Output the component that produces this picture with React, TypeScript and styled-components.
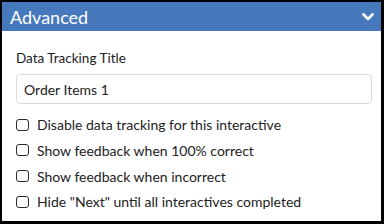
import React from "react";
import styled, { createGlobalStyle } from "styled-components";

const Global = createGlobalStyle`
  html, body { margin: 0; padding: 0; background: #fff; }
  body { font-family: Lato, "Open Sans", sans-serif; }
  * { box-sizing: border-box; }
`;

const Panel = styled.div`
  width: 384px;
  height: 224px;
  border-style: solid;
  border-color: #000;
  border-width: 2px 3px 3px 2px;
  background: #fff;
  display: flex;
  flex-direction: column;
`;

const Header = styled.div`
  height: 29px;
  background: #4678bc;
  color: #fff;
  display: flex;
  align-items: center;
  justify-content: space-between;
  padding: 0 7px 0 8px;
  font-size: 18px;
  line-height: 1;
`;

const Title = styled.span`
  padding-top: 1px;
`;

const Body = styled.div`
  padding: 19px 10px 0 14px;
  display: flex;
  flex-direction: column;
`;

const Label = styled.div`
  font-size: 13.5px;
  color: #222;
  line-height: 16px;
  margin-bottom: 8px;
`;

const TextBox = styled.div`
  width: 356px;
  height: 30px;
  border: 1px solid #dcdcdc;
  border-radius: 4px;
  padding: 0 8px 0 7px;
  display: flex;
  align-items: center;
  font-size: 14px;
  color: #222;
  margin-bottom: 12px;
`;

const Options = styled.div`
  display: flex;
  flex-direction: column;
  gap: 8.8px;
`;

const Row = styled.label`
  display: flex;
  align-items: center;
  gap: 8px;
  height: 17px;
  font-size: 14px;
  color: #222;
`;

const Box = styled.span`
  width: 13px;
  height: 12px;
  border: 1.5px solid #2a2a2a;
  border-radius: 3px;
  flex: none;
`;

const options = [
  "Disable data tracking for this interactive",
  "Show feedback when 100% correct",
  "Show feedback when incorrect",
  'Hide "Next" until all interactives completed',
];

export default function App() {
  return (
    <>
      <Global />
      <Panel>
        <Header>
          <Title>Advanced</Title>
          <svg width="12" height="8" viewBox="0 0 12 8">
            <path d="M1.5 1.5 L6 6 L10.5 1.5" fill="none" stroke="#fff" strokeWidth="2.6" strokeLinecap="round" strokeLinejoin="round" />
          </svg>
        </Header>
        <Body>
          <Label>Data Tracking Title</Label>
          <TextBox>Order Items 1</TextBox>
          <Options>
            {options.map((o) => (
              <Row key={o}>
                <Box />
                {o}
              </Row>
            ))}
          </Options>
        </Body>
      </Panel>
    </>
  );
}
